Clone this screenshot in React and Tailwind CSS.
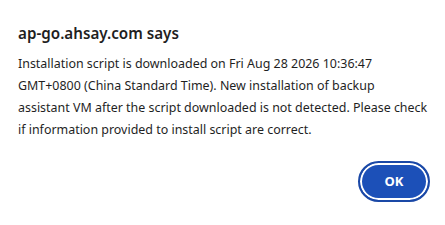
export default function App() {
  return (
    <div
      className="w-[445px] h-[225px] bg-white text-[#1f1f1f] overflow-hidden"
      style={{ fontFamily: '"Segoe UI", "Noto Sans", sans-serif' }}
    >
      <div className="px-[18px] pt-[22px]">
        <h1 className="text-[15.2px] font-semibold leading-[22px]">ap-go.ahsay.com says</h1>
        <p className="mt-[9px] text-[12.45px] leading-[22px] whitespace-nowrap">
          Installation script is downloaded on Fri Aug 28 2026 10:36:47
          <br />
          GMT+0800 (China Standard Time). New installation of backup
          <br />
          assistant VM after the script downloaded is not detected. Please check
          <br />
          if information provided to install script are correct.
        </p>
      </div>
      <div className="flex justify-end pr-[15px] mt-[20px]">
        <button className="h-[41px] w-[72px] rounded-full bg-[#1c50b8] text-white text-[13px] font-bold border-2 border-[#1a48a6] shadow-[inset_0_0_0_2px_white]">
          OK
        </button>
      </div>
    </div>
  );
}
